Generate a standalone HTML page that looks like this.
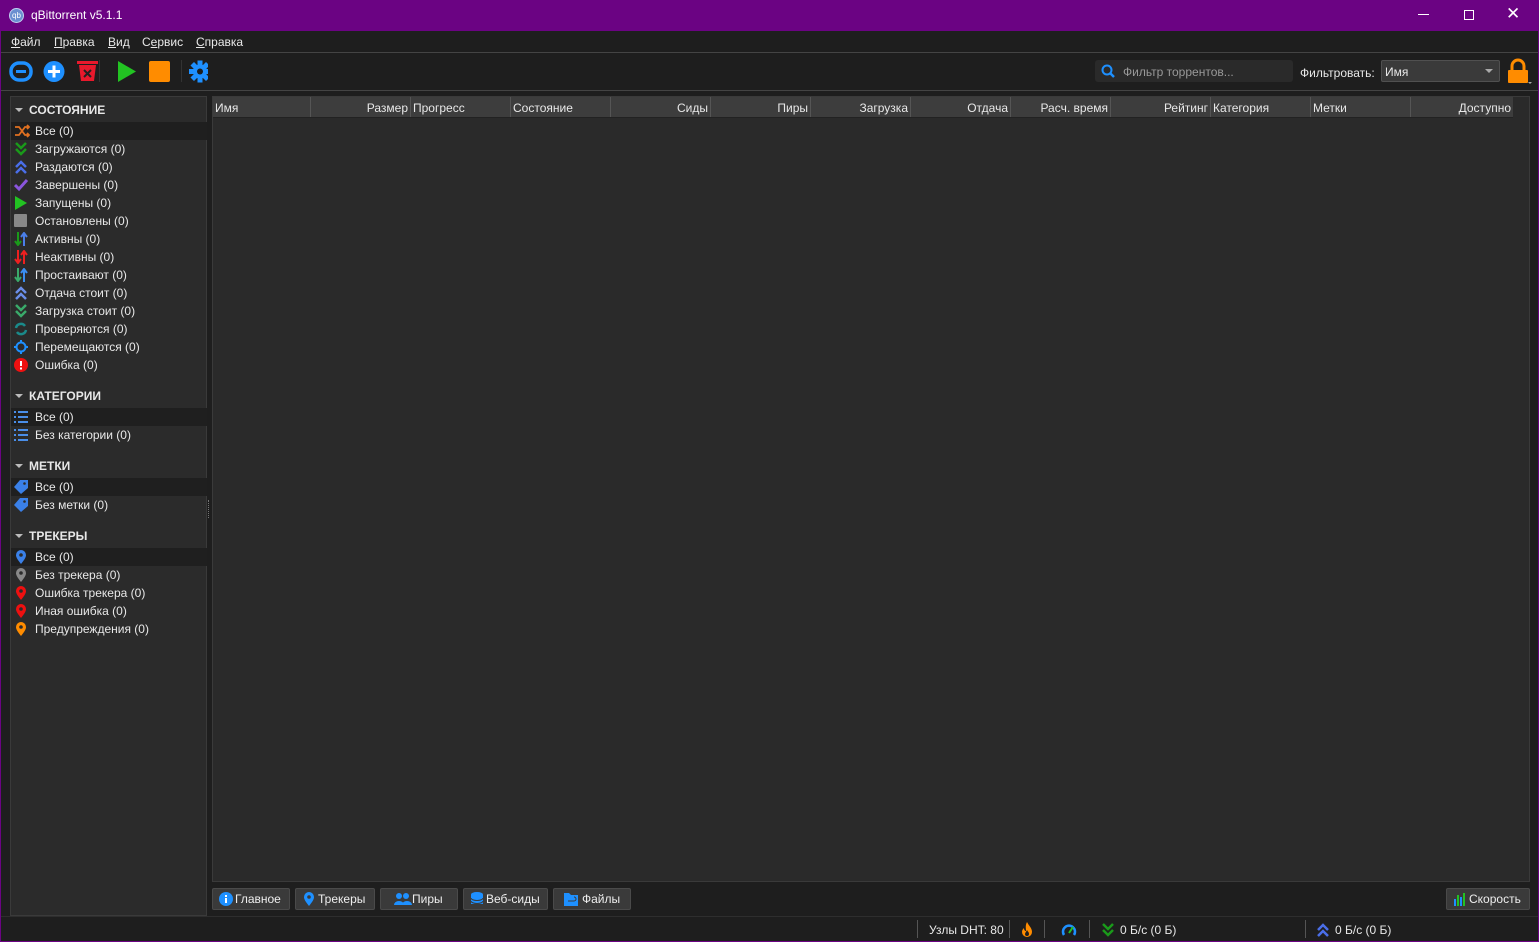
<!DOCTYPE html>
<html><head><meta charset="utf-8"><style>
*{box-sizing:border-box;margin:0;padding:0}
body{width:1539px;height:942px;overflow:hidden;background:#1e1e1e;font-family:"Liberation Sans",sans-serif;font-size:12px;color:#e8e8e8;position:relative}
.a{position:absolute}
#title{left:0;top:0;width:1539px;height:31px;background:#6b0383;color:#fff}
#menu{top:31px;left:1px;width:1537px;height:21px;background:#1e1e1e}
#menu span{position:absolute;top:4px}
#menu u{text-decoration:underline}
#sb{left:10px;top:96px;width:197px;height:820px;background:#2b2b2b;border:1px solid #3a3a3a}
.r{position:absolute;left:0;width:196px;height:18px;line-height:18px;padding-left:24px;white-space:nowrap}
.r svg{position:absolute;left:3px;top:2px}
.sel{background:#1f1f1f}
.h{position:absolute;left:0;font-weight:bold;padding-left:18px;height:18px;line-height:18px}
.h:before{content:"";position:absolute;left:4px;top:7px;border:4px solid transparent;border-top:4px solid #bbb}
#tbl{left:212px;top:96px;width:1318px;height:786px;background:#2a2a2a;border:1px solid #3a3a3a}
#hdr{position:absolute;left:0;top:0;width:1300px;height:21px;background:#3d3d3d;border-bottom:1px solid #222}
.c{position:absolute;top:0;height:20px;line-height:22px;border-right:1px solid #555;padding:0 2px;white-space:nowrap}
.rt{text-align:right}
.btn{position:absolute;top:888px;height:22px;background:#3a3a3a;border:1px solid #4a4a4a;border-radius:2px;line-height:20px;padding-left:22px;color:#eee}
.btn svg{position:absolute;left:6px;top:3px}
.st{position:absolute;top:920px;height:20px;line-height:20px}
.sep{position:absolute;top:920px;width:1px;height:18px;background:#555}
</style></head><body>
<div id="title" class="a">
<div class="a" style="left:9px;top:8px;width:15px;height:15px;border-radius:50%;background:#6a8fd0;border:1px solid #c0d0f0;font-size:8px;color:#fff;text-align:center;line-height:13px">qb</div>
<div class="a" style="left:31px;top:8px;font-size:12px">qBittorrent v5.1.1</div>
<div class="a" style="left:1418px;top:14px;width:11px;height:1px;background:#fff"></div>
<div class="a" style="left:1464px;top:10px;width:10px;height:10px;border:1px solid #fff"></div>
<div class="a" style="left:1506px;top:4px;font-size:17px;color:#fff">✕</div>
</div>
<div id="menu" class="a">
<span style="left:10px"><u>Ф</u>айл</span><span style="left:53px"><u>П</u>равка</span><span style="left:107px"><u>В</u>ид</span><span style="left:141px">С<u>е</u>рвис</span><span style="left:195px"><u>С</u>правка</span>
</div>
<div class="a" style="left:1px;top:52px;width:1537px;height:1px;background:#444"></div>
<svg class="a" style="left:8px;top:59px" width="200" height="26">
<rect x="3" y="4" width="20" height="17" rx="8" fill="none" stroke="#1e90ff" stroke-width="3.5"/><rect x="8" y="11" width="10" height="3" fill="#1e90ff"/>
<circle cx="46" cy="12.5" r="10.5" fill="#1e90ff"/><rect x="40" y="11" width="12" height="3" fill="#fff"/><rect x="44.5" y="6.5" width="3" height="12" fill="#fff"/>
<rect x="69" y="2" width="21" height="3" fill="#e8192c"/><path d="M71 6h17l-2 16h-13z" fill="#e8192c"/><path d="M76 11l7 7M83 11l-7 7" stroke="#222" stroke-width="2"/>
<path d="M110 2l18 10.5L110 23z" fill="#22c322"/>
<rect x="141" y="2" width="21" height="21" rx="2" fill="#ff8c00"/>
<g transform="translate(192,12.5)" fill="#1e90ff"><circle r="7"/><g id="t"><rect x="-2.5" y="-11" width="5" height="5"/><rect x="-2.5" y="6" width="5" height="5"/><rect x="-11" y="-2.5" width="5" height="5"/><rect x="6" y="-2.5" width="5" height="5"/></g><use href="#t" transform="rotate(45)"/><circle r="3" fill="#1e1e1e"/></g>
</svg>
<div class="a" style="left:99px;top:60px;width:1px;height:22px;background:#333"></div>
<div class="a" style="left:181px;top:60px;width:1px;height:22px;background:#333"></div>
<div class="a" style="left:1095px;top:60px;width:198px;height:22px;background:#2a2a2a;border-radius:3px"></div>
<svg class="a" style="left:1101px;top:64px" width="14" height="14"><circle cx="6" cy="6" r="4.5" fill="none" stroke="#1e90ff" stroke-width="2"/><path d="M9 9l4 4" stroke="#1e90ff" stroke-width="2.5"/></svg>
<div class="a" style="left:1123px;top:65px;color:#999">Фильтр торрентов...</div>
<div class="a" style="left:1300px;top:66px">Фильтровать:</div>
<div class="a" style="left:1381px;top:60px;width:119px;height:22px;background:#3a3a3a;border:1px solid #505050;border-radius:2px;padding:4px 3px">Имя</div>
<div class="a" style="left:1485px;top:69px;border:4px solid transparent;border-top:4px solid #aaa"></div>
<svg class="a" style="left:1507px;top:58px" width="26" height="28"><path d="M5 12V8a6 6 0 0112 0v4" fill="none" stroke="#ff8c00" stroke-width="3"/><rect x="1" y="12" width="20" height="13" rx="1" fill="#ff8c00"/><path d="M21 24h4l-2 2z" fill="#aaa"/></svg>
<div class="a" style="left:1px;top:90px;width:1537px;height:1px;background:#444"></div>

<div id="sb" class="a">
<div class="h" style="top:4px">СОСТОЯНИЕ</div>
<div class="r sel" style="top:25px"><svg width="16" height="14"><path d="M1 3h4l6 8h4M1 11h4l6-8h4M13 1l2 2-2 2M13 9l2 2-2 2" stroke="#e07020" stroke-width="1.8" fill="none"/></svg>Все (0)</div>
<div class="r" style="top:43px"><svg width="14" height="14"><path d="M2 1l5 5 5-5M2 7l5 5 5-5" stroke="#1a9a1a" stroke-width="2.5" fill="none"/></svg>Загружаются (0)</div>
<div class="r" style="top:61px"><svg width="14" height="14"><path d="M2 7l5-5 5 5M2 13l5-5 5 5" stroke="#4a6ee8" stroke-width="2.5" fill="none"/></svg>Раздаются (0)</div>
<div class="r" style="top:79px"><svg width="14" height="14"><path d="M1 7l4 4 8-9" stroke="#8a55dd" stroke-width="3" fill="none"/></svg>Завершены (0)</div>
<div class="r" style="top:97px"><svg width="14" height="14"><path d="M1 0l12 7-12 7z" fill="#22c322"/></svg>Запущены (0)</div>
<div class="r" style="top:115px"><svg width="14" height="14"><rect width="13" height="13" rx="1" fill="#888"/></svg>Остановлены (0)</div>
<div class="r" style="top:133px"><svg width="14" height="14"><path d="M4 0v12M1 9l3 4 3-4" stroke="#1a9a1a" stroke-width="2" fill="none"/><path d="M10 14V2M7 5l3-4 3 4" stroke="#4a7ee8" stroke-width="2" fill="none"/></svg>Активны (0)</div>
<div class="r" style="top:151px"><svg width="14" height="14"><path d="M4 0v12M1 9l3 4 3-4M10 14V2M7 5l3-4 3 4" stroke="#ee2020" stroke-width="2" fill="none"/></svg>Неактивны (0)</div>
<div class="r" style="top:169px"><svg width="14" height="14"><path d="M4 0v12M1 9l3 4 3-4" stroke="#3aaa6a" stroke-width="2" fill="none"/><path d="M10 14V2M7 5l3-4 3 4" stroke="#3a8ef0" stroke-width="2" fill="none"/></svg>Простаивают (0)</div>
<div class="r" style="top:187px"><svg width="14" height="14"><path d="M2 7l5-5 5 5M2 13l5-5 5 5" stroke="#6a8ee8" stroke-width="2.5" fill="none"/></svg>Отдача стоит (0)</div>
<div class="r" style="top:205px"><svg width="14" height="14"><path d="M2 1l5 5 5-5M2 7l5 5 5-5" stroke="#3aaa6a" stroke-width="2.5" fill="none"/></svg>Загрузка стоит (0)</div>
<div class="r" style="top:223px"><svg width="14" height="14"><path d="M2 6a5 5 0 019-2M12 8a5 5 0 01-9 2" stroke="#1a8a8a" stroke-width="2.5" fill="none"/></svg>Проверяются (0)</div>
<div class="r" style="top:241px"><svg width="14" height="14"><circle cx="7" cy="7" r="4.5" stroke="#1e90ff" stroke-width="2" fill="none"/><path d="M7 0v3M7 11v3M0 7h3M11 7h3" stroke="#1e90ff" stroke-width="2"/></svg>Перемещаются (0)</div>
<div class="r" style="top:259px"><svg width="14" height="14"><circle cx="7" cy="7" r="7" fill="#ee1010"/><rect x="6" y="3" width="2" height="5" fill="#fff"/><rect x="6" y="9.5" width="2" height="2" fill="#fff"/></svg>Ошибка (0)</div>
<div class="h" style="top:290px">КАТЕГОРИИ</div>
<div class="r sel" style="top:311px"><svg width="14" height="14"><path d="M0 2h2M4 2h10M0 7h2M4 7h10M0 12h2M4 12h10" stroke="#4a8ee8" stroke-width="2"/></svg>Все (0)</div>
<div class="r" style="top:329px"><svg width="14" height="14"><path d="M0 2h2M4 2h10M0 7h2M4 7h10M0 12h2M4 12h10" stroke="#4a8ee8" stroke-width="2"/></svg>Без категории (0)</div>
<div class="h" style="top:360px">МЕТКИ</div>
<div class="r sel" style="top:381px"><svg width="14" height="14"><path d="M6 0h8v8l-7 6-7-7z" fill="#3a80e8"/><circle cx="10.5" cy="3.5" r="1.3" fill="#2b2b2b"/></svg>Все (0)</div>
<div class="r" style="top:399px"><svg width="14" height="14"><path d="M6 0h8v8l-7 6-7-7z" fill="#3a80e8"/><circle cx="10.5" cy="3.5" r="1.3" fill="#2b2b2b"/></svg>Без метки (0)</div>
<div class="h" style="top:430px">ТРЕКЕРЫ</div>
<div class="r sel" style="top:451px"><svg width="14" height="14"><path d="M7 14C3 9 2 7 2 5a5 5 0 0110 0c0 2-1 4-5 9z" fill="#3a80e8"/><circle cx="7" cy="5" r="1.8" fill="#2b2b2b"/></svg>Все (0)</div>
<div class="r" style="top:469px"><svg width="14" height="14"><path d="M7 14C3 9 2 7 2 5a5 5 0 0110 0c0 2-1 4-5 9z" fill="#888"/><circle cx="7" cy="5" r="1.8" fill="#2b2b2b"/></svg>Без трекера (0)</div>
<div class="r" style="top:487px"><svg width="14" height="14"><path d="M7 14C3 9 2 7 2 5a5 5 0 0110 0c0 2-1 4-5 9z" fill="#ee1010"/><circle cx="7" cy="5" r="1.8" fill="#2b2b2b"/></svg>Ошибка трекера (0)</div>
<div class="r" style="top:505px"><svg width="14" height="14"><path d="M7 14C3 9 2 7 2 5a5 5 0 0110 0c0 2-1 4-5 9z" fill="#ee1010"/><circle cx="7" cy="5" r="1.8" fill="#2b2b2b"/></svg>Иная ошибка (0)</div>
<div class="r" style="top:523px"><svg width="14" height="14"><path d="M7 14C3 9 2 7 2 5a5 5 0 0110 0c0 2-1 4-5 9z" fill="#ff8c00"/><circle cx="7" cy="5" r="1.8" fill="#2b2b2b"/></svg>Предупреждения (0)</div>
</div>
<div class="a" style="left:208px;top:500px;width:3px;height:18px;border-left:1px dotted #777"></div>

<div id="tbl" class="a"><div id="hdr">
<div class="c" style="left:0;width:98px">Имя</div>
<div class="c rt" style="left:98px;width:100px">Размер</div>
<div class="c" style="left:198px;width:100px">Прогресс</div>
<div class="c" style="left:298px;width:100px">Состояние</div>
<div class="c rt" style="left:398px;width:100px">Сиды</div>
<div class="c rt" style="left:498px;width:100px">Пиры</div>
<div class="c rt" style="left:598px;width:100px">Загрузка</div>
<div class="c rt" style="left:698px;width:100px">Отдача</div>
<div class="c rt" style="left:798px;width:100px">Расч. время</div>
<div class="c rt" style="left:898px;width:100px">Рейтинг</div>
<div class="c" style="left:998px;width:100px">Категория</div>
<div class="c" style="left:1098px;width:100px">Метки</div>
<div class="c rt" style="left:1198px;width:102px;border:0">Доступно</div>
</div></div>

<div class="btn" style="left:212px;width:78px"><svg width="14" height="14"><circle cx="7" cy="7" r="7" fill="#1e90ff"/><rect x="6" y="6" width="2" height="5" fill="#fff"/><rect x="6" y="3" width="2" height="2" fill="#fff"/></svg>Главное</div>
<div class="btn" style="left:295px;width:80px"><svg width="14" height="14"><path d="M7 14C3 9 2 7 2 5a5 5 0 0110 0c0 2-1 4-5 9z" fill="#1e90ff"/><circle cx="7" cy="5" r="1.8" fill="#3a3a3a"/></svg>Трекеры</div>
<div class="btn" style="left:380px;width:78px;padding-left:31px"><svg width="18" height="14" style="left:13px"><circle cx="5" cy="4" r="3" fill="#1e90ff"/><circle cx="12" cy="4" r="3" fill="#1e90ff"/><path d="M0 13a5 4 0 0110 0zM8 13a5 4 0 0110 0z" fill="#1e90ff"/></svg>Пиры</div>
<div class="btn" style="left:463px;width:85px"><svg width="14" height="14"><ellipse cx="7" cy="2.5" rx="6" ry="2.5" fill="#1e90ff"/><rect x="1" y="3" width="12" height="9" fill="#1e90ff"/><path d="M1 6a6 2.5 0 0012 0M1 9a6 2.5 0 0012 0" stroke="#3a3a3a" fill="none"/></svg>Веб-сиды</div>
<div class="btn" style="left:553px;width:78px;padding-left:28px"><svg width="14" height="14" style="left:10px"><path d="M0 1h5l2 2h7v11H0z" fill="#1e90ff"/><path d="M4 9h6a2 2 0 000-4" stroke="#3a3a3a" fill="none"/></svg>Файлы</div>
<div class="btn" style="left:1446px;width:84px"><svg width="14" height="14"><rect x="1" y="7" width="2" height="7" fill="#1e90ff"/><rect x="4" y="3" width="2" height="11" fill="#22c322"/><rect x="7" y="5" width="2" height="9" fill="#1e90ff"/><rect x="10" y="1" width="2" height="13" fill="#22c322"/></svg>Скорость</div>
<div class="a" style="left:1px;top:916px;width:1537px;height:1px;background:#2e2e2e"></div>
<div class="sep" style="left:917px"></div><div class="st" style="left:929px">Узлы DHT: 80</div>
<div class="sep" style="left:1009px"></div>
<svg class="a" style="left:1021px;top:922px" width="12" height="16"><path d="M6 0C8 4 11 6 11 10a5 5 0 01-10 0c0-2 1-3 2-4 0 2 1 3 2 3 0-3-1-5 1-9z" fill="#ff8c00"/><path d="M6 8c1 2 2 2 2 4a2 2 0 01-4 0c0-1 1-2 2-4z" fill="#1e1e1e"/></svg>
<div class="sep" style="left:1044px"></div>
<svg class="a" style="left:1061px;top:923px" width="16" height="14"><path d="M3 12A6 6 0 1113 12" stroke="#1e90ff" stroke-width="2.5" fill="none"/><path d="M8 10l4-6" stroke="#22c322" stroke-width="2"/></svg>
<div class="sep" style="left:1089px"></div>
<svg class="a" style="left:1101px;top:923px" width="14" height="14"><path d="M2 1l5 5 5-5M2 7l5 5 5-5" stroke="#1a9a1a" stroke-width="2.5" fill="none"/></svg>
<div class="st" style="left:1120px">0 Б/с (0 Б)</div>
<div class="sep" style="left:1305px"></div>
<svg class="a" style="left:1316px;top:923px" width="14" height="14"><path d="M2 7l5-5 5 5M2 13l5-5 5 5" stroke="#4a6ee8" stroke-width="2.5" fill="none"/></svg>
<div class="st" style="left:1335px">0 Б/с (0 Б)</div>
<div class="a" style="left:0;top:31px;width:1px;height:911px;background:#6b0383"></div>
<div class="a" style="left:1538px;top:31px;width:1px;height:911px;background:#6b0383"></div>
<div class="a" style="left:0;top:941px;width:1539px;height:1px;background:#6b0383"></div>
</body></html>
